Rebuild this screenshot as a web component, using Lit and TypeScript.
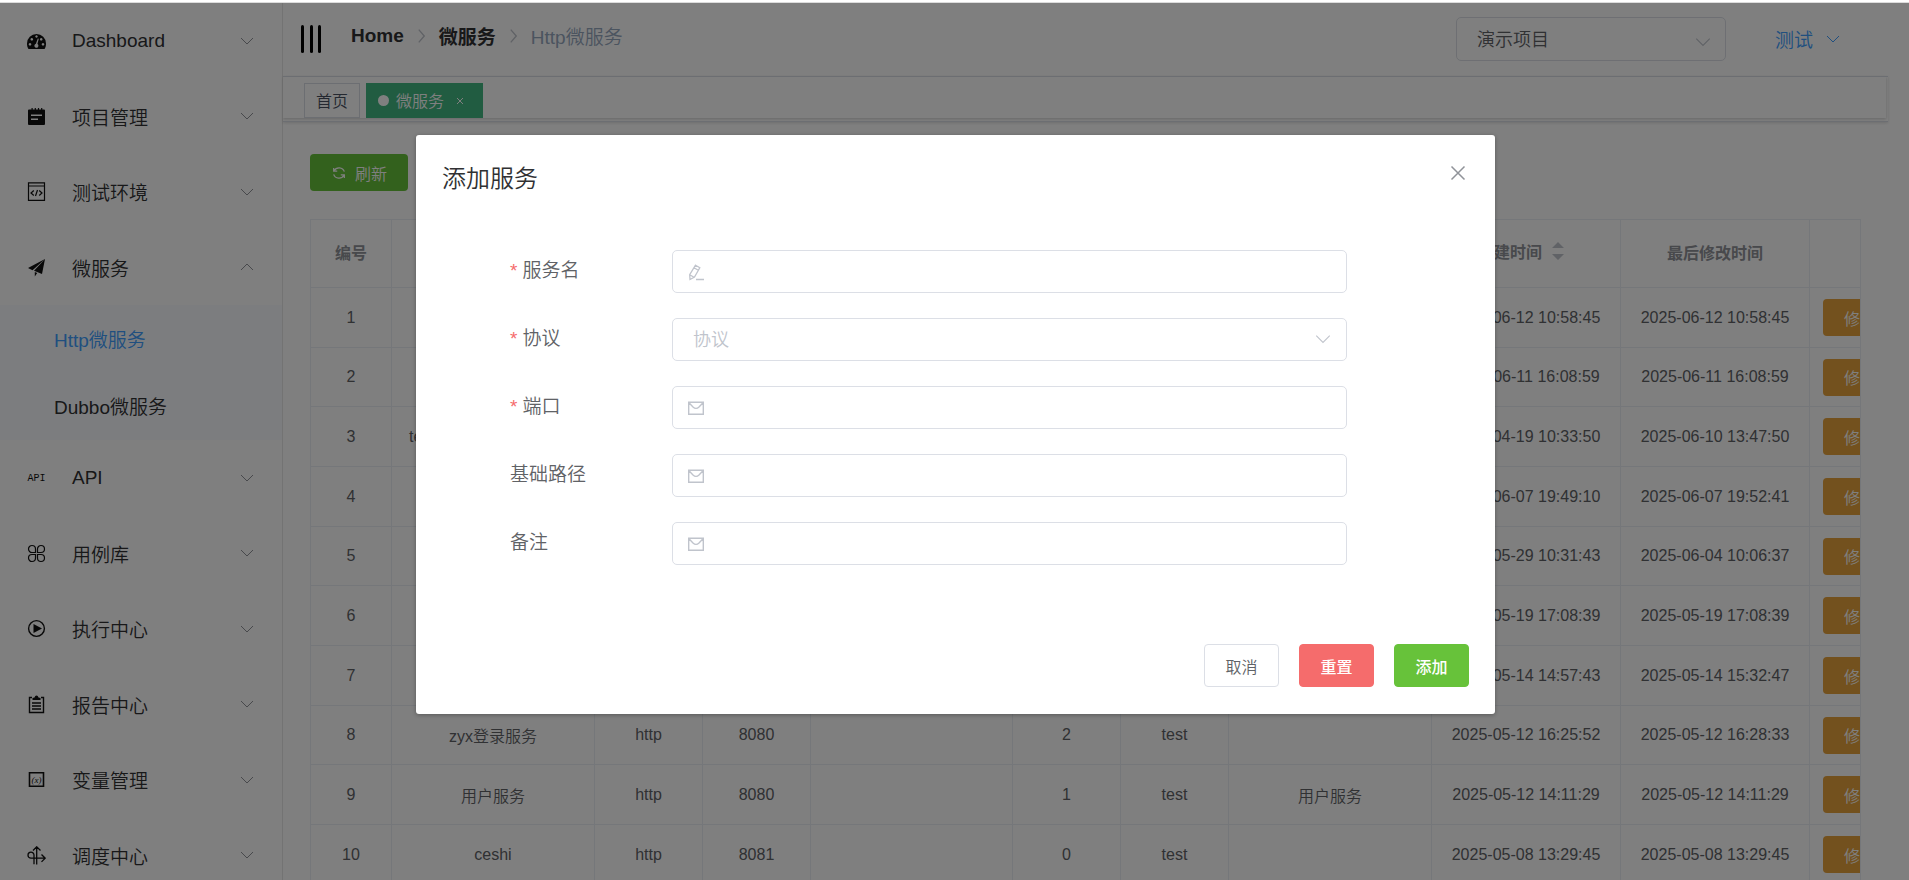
import { LitElement, html, css, svg, nothing } from "lit";
import { customElement, state } from "lit/decorators.js";
import { classMap } from "lit/directives/class-map.js";

interface MenuEntry {
  label: string;
  icon: string;
  open?: boolean;
  children?: { label: string; active?: boolean }[];
}

interface Service {
  name?: string;
  protocol?: string;
  port?: string;
  path?: string;
  count?: string;
  owner?: string;
  remark?: string;
  created: string;
  updated: string;
}

const MENU: MenuEntry[] = [
  { label: "Dashboard", icon: "gauge" },
  { label: "项目管理", icon: "calendar" },
  { label: "测试环境", icon: "code" },
  {
    label: "微服务",
    icon: "plane",
    open: true,
    children: [{ label: "Http微服务", active: true }, { label: "Dubbo微服务" }],
  },
  { label: "API", icon: "api" },
  { label: "用例库", icon: "command" },
  { label: "执行中心", icon: "play" },
  { label: "报告中心", icon: "report" },
  { label: "变量管理", icon: "variable" },
  { label: "调度中心", icon: "schedule" },
];

const SERVICES: Service[] = [
  { created: "2025-06-12 10:58:45", updated: "2025-06-12 10:58:45" },
  { created: "2025-06-11 16:08:59", updated: "2025-06-11 16:08:59" },
  { name: "test-http-demo-service1", created: "2025-04-19 10:33:50", updated: "2025-06-10 13:47:50" },
  { created: "2025-06-07 19:49:10", updated: "2025-06-07 19:52:41" },
  { created: "2025-05-29 10:31:43", updated: "2025-06-04 10:06:37" },
  { created: "2025-05-19 17:08:39", updated: "2025-05-19 17:08:39" },
  { created: "2025-05-14 14:57:43", updated: "2025-05-14 15:32:47" },
  { name: "zyx登录服务", protocol: "http", port: "8080", count: "2", owner: "test", created: "2025-05-12 16:25:52", updated: "2025-05-12 16:28:33" },
  { name: "用户服务", protocol: "http", port: "8080", count: "1", owner: "test", remark: "用户服务", created: "2025-05-12 14:11:29", updated: "2025-05-12 14:11:29" },
  { name: "ceshi", protocol: "http", port: "8081", count: "0", owner: "test", created: "2025-05-08 13:29:45", updated: "2025-05-08 13:29:45" },
];

const COLUMN_WIDTHS = [81, 203, 108, 108, 202, 108, 108, 203, 189, 189, 270];

const FIELDS = [
  { id: "name", label: "服务名", required: true, icon: "edit" },
  { id: "protocol", label: "协议", required: true, icon: "" },
  { id: "port", label: "端口", required: true, icon: "mail" },
  { id: "path", label: "基础路径", required: false, icon: "mail" },
  { id: "remark", label: "备注", required: false, icon: "mail" },
];

const ICONS: Record<string, unknown> = {
  gauge: svg`<path fill="currentColor" fill-rule="evenodd" d="M1 17.2A9.3 9.3 0 0 1 0 12.500a9.500 9.500 0 0 1 19 0 9.300 9.300 0 0 1-1 4.700l-.5.8h-16zM3 12a1.300 1.300 0 1 0 .01 0zM4.800 7a1.300 1.300 0 1 0 .01 0zM9.500 4.300a1.200 1.200 0 1 0 .01 0zM14.200 7a1.300 1.300 0 1 0 .01 0zM16 12a1.300 1.300 0 1 0 .01 0zM10.800 7.500 8.900 12.800a2 2 0 1 0 1.500.2l1.400-5.200z"/>`,
  calendar: svg`<path fill="currentColor" fill-rule="evenodd" d="M2 2.500h2.500V1h1.200v1.500h2V1h1.200v1.500h2V1h1.200v1.500h2V1h1.200v1.500H17q1 0 1 1V17q0 1-1 1H2q-1 0-1-1V3.500q0-1 1-1zM4 7.500v1.600h11V7.500zM4 11.500v1.600h7v-1.600z"/>`,
  code: svg`<path fill="none" stroke="currentColor" stroke-width="1.200" d="M1.500.8h16v17.500h-16zM1.500 4h16M6.800 8.500 4 11l2.800 2.500M12.200 8.500 15 11l-2.800 2.500M10.500 8 8.500 14"/>`,
  plane: svg`<path fill="currentColor" d="M18 1 1 10l4.500 2.200zM18 1 7 12.800l8 3.200zM7.800 14v4.500l2.400-3.500z"/>`,
  command: svg`<path fill="none" stroke="currentColor" stroke-width="1.200" d="M8.500 8.500H5A3.500 3.500 0 1 1 8.500 5zM10.500 8.500V5A3.500 3.500 0 1 1 14 8.500zM8.500 10.500V14A3.500 3.500 0 1 1 5 10.500zM10.500 10.500H14a3.500 3.500 0 1 1-3.500 3.500z"/>`,
  play: svg`<circle cx="9.500" cy="9.500" r="7.900" fill="none" stroke="currentColor" stroke-width="1.400"/><path fill="currentColor" d="M6.500 5v9l8.500-4.500z"/>`,
  report: svg`<path fill="none" stroke="currentColor" stroke-width="1.400" d="M5 2.500H2.500v15h14v-15H14M5 8h9M5 11h9M5 14h9"/><path fill="currentColor" d="M5.500 5V3l2-.5Q8 .5 9.500.5t2 2l2 .5v2z"/>`,
  variable: svg`<path fill="none" stroke="currentColor" stroke-width="1.600" d="M2.500 2.800h14v13.500h-14z"/><text x="9.500" y="12.500" text-anchor="middle" font-size="9" font-style="italic" font-family="Liberation Serif, serif" fill="currentColor">(x)</text>`,
  api: svg`<text x="9.500" y="13" text-anchor="middle" font-size="10" font-family="Liberation Mono, monospace" fill="currentColor">API</text>`,
  schedule: svg`<path fill="none" stroke="currentColor" stroke-width="1.300" d="M9.700 18.500V1M6 4.500 9.700.8l3.800 3.700M18 12.200H4a3 3 0 1 1 3-3v9M14.500 8.500l3.700 3.700-3.700 3.700"/>`,
};

const chevron = (up = false) => html`<svg class="chevron" viewBox="0 0 16 16" aria-hidden="true">
  <path fill="none" stroke="currentColor" d=${up ? "M2 11l6-6 6 6" : "M2 5l6 6 6-6"}></path>
</svg>`;

@customElement("side-menu")
class SideMenu extends LitElement {
  static styles = css`
    :host { display: block; border-right: 1px solid #e6e6e6; background: #fff; color: #303133; }
    a { display: flex; align-items: center; color: inherit; text-decoration: none; }
    .item { height: 75px; padding: 0 27px; box-sizing: border-box; gap: 26px; }
    .item.even { height: 76px; }
    .icon { width: 19px; height: 19px; flex: none; color: #111; }
    .label { flex: 1; }
    .chevron { width: 16px; height: 16px; color: #909399; }
    .sub { background: #f8fbff; padding-bottom: 1px; }
    .sub a { height: 67px; padding-left: 54px; }
    .sub .active { color: #409eff; }
  `;

  render() {
    return html`<nav>
      ${MENU.map(
        (m, i) => html`
          <a href="#" class=${classMap({ item: true, even: i % 2 === 1 })}>
            <svg class="icon" viewBox="0 0 19 19" aria-hidden="true">${ICONS[m.icon]}</svg>
            <span class="label">${m.label}</span>
            ${chevron(m.open)}
          </a>
          ${m.children
            ? html`<div class="sub">
                ${m.children.map((c) => html`<a href="#" class=${classMap({ active: !!c.active })}>${c.label}</a>`)}
              </div>`
            : nothing}
        `
      )}
    </nav>`;
  }
}

@customElement("top-bar")
class TopBar extends LitElement {
  static styles = css`
    :host { display: block; }
    button, select { font: inherit; color: inherit; background: none; margin: 0; }
    .bar { display: flex; align-items: center; height: 71px; padding: 0 68px 2px 18px; }
    .toggle { border: 0; padding: 0; width: 20px; height: 28px; display: flex; justify-content: space-between; }
    .toggle i { width: 3px; border-radius: 2px; background: #000; }
    .crumbs { display: flex; align-items: center; gap: 12px; margin: 0 auto 6px 30px; color: #303133; }
    .crumbs a { color: inherit; text-decoration: none; font-weight: 700; }
    .crumbs .last { color: #97a8be; }
    .sep { width: 11px; height: 16px; color: #c0c4cc; }
    .project { position: relative; width: 270px; }
    .project select { display: block; width: 100%; height: 44px; border: 1px solid #dcdfe6; border-radius: 5px; padding: 2px 20px 0; font-size: 18px; color: #606266; appearance: none; }
    .project .chevron { position: absolute; right: 14px; top: 16px; width: 18px; height: 18px; color: #c0c4cc; }
    .user { border: 0; padding: 0; margin-left: 49px; display: flex; align-items: center; gap: 12px; color: #409eff; }
    .chevron { width: 16px; height: 16px; }
    .tags { margin-right: 21px; height: 44px; border: 1px solid #d8dce5; border-width: 1px 0; box-shadow: 0 1px 3px rgba(0, 0, 0, 0.14); overflow: hidden; }
    .track { margin-right: 2px; height: 41px; padding: 6px 0 0 21px; box-sizing: border-box; display: flex; gap: 6px; box-shadow: 0 1px 3px rgba(0, 0, 0, 0.2); font-size: 16px; }
    .tag { height: 35px; box-sizing: border-box; border: 1px solid #d8dce5; padding: 0 11px 1px; display: flex; align-items: center; color: #495060; }
    .tag a { color: inherit; text-decoration: none; }
    .tag.active { background: #42b983; border-color: #42b983; color: #fff; }
    .dot { width: 11px; height: 11px; border-radius: 50%; background: #fff; margin-right: 7px; }
    .close { border: 0; padding: 0; width: 22px; height: 22px; margin-left: 5px; }
    .close svg { display: block; width: 8px; height: 8px; margin: 1px auto 0; }
  `;

  render() {
    const sep = html`<svg class="sep" viewBox="0 0 12 16" aria-hidden="true">
      <path fill="none" stroke="currentColor" stroke-width="1.500" d="M3 1l6 7-6 7"></path>
    </svg>`;
    return html`
      <header class="bar">
        <button class="toggle" aria-label="菜单"><i></i><i></i><i></i></button>
        <nav class="crumbs">
          <a href="#">Home</a>${sep}<a href="#">微服务</a>${sep}<span class="last">Http微服务</span>
        </nav>
        <div class="project">
          <select aria-label="项目"><option>演示项目</option></select>
          ${chevron()}
        </div>
        <button class="user">测试 ${chevron()}</button>
      </header>
      <div class="tags">
        <div class="track">
          <span class="tag"><a href="#">首页</a></span>
          <span class="tag active">
            <i class="dot"></i><a href="#">微服务</a>
            <button class="close" aria-label="关闭">
              <svg viewBox="0 0 8 8"><path stroke="currentColor" d="M1 1l6 6M7 1L1 7"></path></svg>
            </button>
          </span>
        </div>
      </div>
    `;
  }
}

@customElement("service-table")
class ServiceTable extends LitElement {
  static styles = css`
    :host { display: block; border: 1px solid #ebeef5; border-width: 1px 1px 0 1px; overflow: hidden; font-size: 16px; color: #606266; }
    table { table-layout: fixed; border-collapse: separate; border-spacing: 0; width: 1769px; }
    th, td { padding: 0; height: 60px; box-sizing: border-box; border: 1px solid #ebeef5; border-width: 0 1px 1px 0; text-align: center; white-space: nowrap; }
    th { height: 68px; color: #909399; font-weight: 700; padding-bottom: 3px; }
    tr:nth-child(3n + 2) td { height: 59px; }
    .sortable { display: flex; justify-content: center; align-items: center; padding-bottom: 3px; }
    .carets { width: 32px; height: 20px; color: #c0c4cc; }
    .ops { text-align: left; padding-left: 13px; }
    .edit { display: block; font: inherit; color: #fff; background: #e6a23c; border: 0; border-radius: 4px; height: 37px; padding: 0 21px; }
  `;

  render() {
    const heads = ["编号", "", "", "", "", "", "", "", "创建时间", "最后修改时间", ""];
    return html`<table>
      <colgroup>${COLUMN_WIDTHS.map((w) => html`<col style="width:${w}px" />`)}</colgroup>
      <thead>
        <tr>
          ${heads.map((h) =>
            h === "创建时间"
              ? html`<th>
                  <span class="sortable">${h}<svg class="carets" viewBox="0 0 32 20" aria-hidden="true">
                    <path fill="currentColor" d="M10 7l6-6 6 6zM10 13l6 6 6-6z"></path></svg></span>
                </th>`
              : html`<th>${h}</th>`
          )}
        </tr>
      </thead>
      <tbody>
        ${SERVICES.map(
          (s, i) => html`<tr>
            <td>${i + 1}</td>
            <td>${s.name}</td>
            <td>${s.protocol}</td>
            <td>${s.port}</td>
            <td>${s.path}</td>
            <td>${s.count}</td>
            <td>${s.owner}</td>
            <td>${s.remark}</td>
            <td>${s.created}</td>
            <td>${s.updated}</td>
            <td class="ops"><button class="edit">修改</button></td>
          </tr>`
        )}
      </tbody>
    </table>`;
  }
}

@customElement("service-dialog")
class ServiceDialog extends LitElement {
  static styles = css`
    :host { position: absolute; inset: 0; display: flex; align-items: flex-start; justify-content: center; padding-left: 2px; background: rgba(0, 0, 0, 0.5); }
    button, input, select { font: inherit; margin: 0; }
    .dialog { width: 1079px; max-width: 100%; margin-top: 15vh; background: #fff; border-radius: 3px; box-shadow: 0 1px 4px rgba(0, 0, 0, 0.3); box-sizing: border-box; }
    .head { display: flex; justify-content: space-between; align-items: flex-start; padding: 26px 26px 0; }
    h2 { margin: 0; font-size: 24px; line-height: 36px; font-weight: inherit; color: #303133; }
    .close { border: 0; background: none; padding: 1px 0 0; color: #909399; }
    .close svg { display: block; width: 22px; height: 22px; }
    .form { display: grid; gap: 25px; padding: 53px 148px 79px 94px; color: #606266; }
    .row { display: grid; grid-template-columns: 162px 1fr; }
    label { line-height: 42px; }
    .required::before { content: "*"; color: #f56c6c; margin-right: 5px; }
    .field { display: flex; align-items: center; height: 43px; box-sizing: border-box; border: 1px solid #dcdfe6; border-radius: 5px; color: #c0c4cc; position: relative; }
    .field input, .field select { flex: 1; min-width: 0; height: 100%; border: 0; outline: 0; background: none; font-size: 18px; color: #606266; padding: 0 14px; }
    .field select { appearance: none; color: #c0c4cc; padding: 0 20px; }
    .prefix { width: 18px; height: 18px; margin-left: 14px; }
    .field .chevron { position: absolute; right: 14px; top: 11px; width: 18px; height: 18px; }
    .foot { display: flex; justify-content: flex-end; gap: 20px; padding: 0 26px 27px; }
    .foot button { height: 43px; width: 75px; padding: 0; font-size: 16px; border-radius: 4px; border: 1px solid #dcdfe6; background: #fff; color: #606266; }
    .foot .reset { background: #f56c6c; border-color: #f56c6c; color: #fff; font-weight: 500; }
    .foot .add { background: #67c23a; border-color: #67c23a; color: #fff; font-weight: 500; }
  `;

  private prefix(name: string) {
    const shape =
      name === "edit"
        ? svg`<path fill="none" stroke="currentColor" stroke-width="1.300" d="M8.500 2.200 12.800 4.700 7.500 14 3 16.500 2.700 11.700zM7 4.800l4.300 2.500M2.700 11.700l4.300 2.600M9 16.500h8"/>`
        : svg`<path fill="none" stroke="currentColor" stroke-width="1.400" d="M1.700 3.200h14.600v12H1.700zM2 3.700l4 4.200q3 3 6 0l4-4.200"/>`;
    return html`<svg class="prefix" viewBox="0 0 18 18" aria-hidden="true">${shape}</svg>`;
  }

  render() {
    return html`<section class="dialog" role="dialog" aria-labelledby="title">
      <div class="head">
        <h2 id="title">添加服务</h2>
        <button class="close" aria-label="关闭">
          <svg viewBox="0 0 22 22"><path stroke="currentColor" stroke-width="1.500" d="M4.500 4.500l13 13M17.500 4.500l-13 13"></path></svg>
        </button>
      </div>
      <form class="form">
        ${FIELDS.map(
          (f) => html`<div class="row">
            <label for=${f.id} class=${classMap({ required: f.required })}>${f.label}</label>
            <div class="field">
              ${f.icon
                ? html`${this.prefix(f.icon)}<input id=${f.id} type="text" />`
                : html`<select id=${f.id}><option>协议</option></select>${chevron()}`}
            </div>
          </div>`
        )}
      </form>
      <div class="foot">
        <button type="button">取消</button>
        <button type="button" class="reset">重置</button>
        <button type="button" class="add">添加</button>
      </div>
    </section>`;
  }
}

@customElement("app-root")
class AppRoot extends LitElement {
  @state() private dialogOpen = true;

  static styles = css`
    :host { display: flex; flex-direction: column; height: 100vh; overflow: hidden; background: #fff; font-family: "Liberation Sans", "Noto Sans CJK SC", sans-serif; font-size: 19px; font-weight: 350; }
    .edge { flex: none; height: 2px; border-bottom: 1px solid #dcdcdc; }
    .shell { position: relative; flex: 1; min-height: 0; display: grid; grid-template-columns: 283px minmax(0, 1fr); overflow: hidden; }
    .content { padding: 32px 48px 0 27px; }
    .refresh { display: flex; align-items: center; gap: 8px; height: 37px; padding: 0 21px; margin-bottom: 28px; border: 0; border-radius: 4px; background: #67c23a; color: #fff; font: inherit; font-size: 16px; }
    .refresh svg { width: 16px; height: 16px; }
  `;

  render() {
    return html`
      <div class="edge"></div>
      <div class="shell">
        <side-menu></side-menu>
        <main>
          <top-bar></top-bar>
          <div class="content">
            <button class="refresh">
              <svg viewBox="0 0 18 18" aria-hidden="true">
                <path fill="none" stroke="currentColor" stroke-width="1.400" d="M3 7.500V3.500M3 7h4M3.500 6.500A6.300 6.300 0 0 1 15 7.500M15 10.500v4M15 11h-4M14.500 11.500A6.300 6.300 0 0 1 3 10.500"></path>
              </svg>
              刷新
            </button>
            <service-table></service-table>
          </div>
        </main>
        ${this.dialogOpen ? html`<service-dialog></service-dialog>` : nothing}
      </div>
    `;
  }
}
